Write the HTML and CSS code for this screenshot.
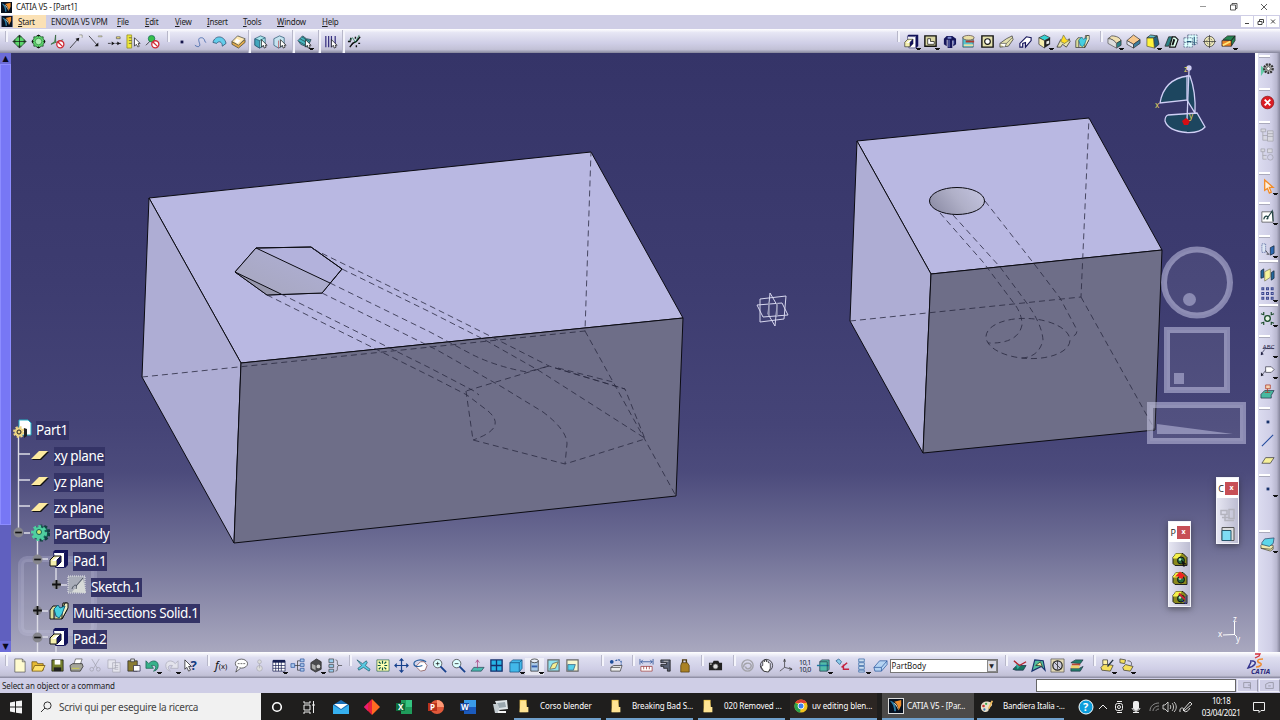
FILE: index.html
```html
<!DOCTYPE html>
<html lang="it">
    <head>
        <meta charset="UTF-8" />
        <title>CATIA V5 - [Part1]</title>
        <link rel="stylesheet" href="styles.css" />
    </head>
    <body>
        <svg class="defs" width="0" height="0">
            <symbol id="catia" viewBox="0 0 16 16">
                <path fill="#06101f" d="M0 0h16v16H0z" />
                <path fill="#2b7da8" d="M1 2c4 0 7 4 7 12H6C6 9 4 5 1 2z" />
                <path fill="#ef8d2c" d="M6 3l8-2v6l-3 6C11 9 9 5 6 3z" />
                <path fill="#fff2cf" d="M5 4c3 1 5 4 6 9l-2-4z" />
            </symbol>
            <symbol id="pad" viewBox="0 0 20 20">
                <path fill="#12125a" d="M6 1h13v15l-3 3V3H4z" />
                <path fill="#fff" stroke="#12125a" d="M4.500 3.500h11v15h-9z" />
                <path fill="#f4efae" stroke="#111" d="M1 11l4-4h7v6l-4 4H1z" />
                <path fill="#fff" d="M8 8h4l-4 4H3z" />
                <path fill="none" stroke="#111" d="M8 17v-6l4-4" />
                <path fill="#12125a" d="M8 11l4-4v6l-4 4z" />
            </symbol>
            <symbol id="plane" viewBox="0 0 20 12">
                <path fill="#111" d="M2 11l8-8h9l-8 8z" />
                <path fill="#fdeaa0" d="M1 10l8-8h9l-8 8z" />
            </symbol>
            <symbol id="loft" viewBox="0 0 20 20">
                <path fill="#d9dc9a" stroke="#111" d="M1 18V9l3-4h5l-4 4v9zM5 18h8l5-9V2h-4l-1 7" />
                <path fill="#f1efc0" stroke="#111" d="M13 9l3-7h3v5l-6 11z" />
                <path fill="#45cfe0" stroke="#16607a" d="M5 8l4-4 2 3 5-2-3 8-3 4-3-2z" />
            </symbol>
            <symbol id="minus" viewBox="0 0 10 10">
                <circle cx="5" cy="5" r="4.500" fill="#85858c" />
                <path stroke="#111" stroke-width="1.500" d="M2 5h6" />
            </symbol>
            <symbol id="plus" viewBox="0 0 10 10">
                <circle cx="5" cy="5" r="4" fill="#85858c" />
                <path stroke="#111" stroke-width="1.600" d="M1 5h8M5 1v8" />
            </symbol>
            <symbol id="house" viewBox="0 0 16 16">
                <path fill="#8b8a1c" stroke="#222" d="M1 6l3-4h7l4 4v8H3l-2-2z" />
                <path fill="#f4f04b" d="M1 6l3-4h6L7 6v1H1z" />
                <circle cx="9" cy="9" r="3.500" fill="#256b3c" stroke="#111" />
                <circle cx="8" cy="8" r="1.300" fill="#b7eec0" />
            </symbol>
            <symbol id="folder" viewBox="0 0 12 16">
                <path fill="#f1c951" d="M1 1h8v14H1z" />
                <path fill="#ffe493" d="M2 2h6l1 7h2v6H1z" />
            </symbol>
            <symbol id="cube" viewBox="0 0 16 16">
                <path fill="#a8e6ec" stroke="#24526d" d="M2 5l6-3 5 2v8l-6 3-5-3z" />
                <path fill="#43a7bd" stroke="#24526d" d="M2 5l5 2v8l-5-3zM7 7l6-3" />
            </symbol>
            <symbol id="arrow" viewBox="0 0 16 16">
                <path fill="#fff" stroke="#111" d="M9 6v8l2-2 1 3 2-1-1-2h2z" />
            </symbol>
        </svg>

        <header class="titlebar">
            <svg class="logo"><use href="#catia" /></svg>
            <span>CATIA V5 - [Part1]</span>
            <svg class="win-btns" width="120" height="15" fill="none" stroke="#333">
                <path stroke="#999" d="M20 6.500h6" />
                <path stroke-width=".8" d="M50.500 5h5v5h-5zM52 5V3.500h5V8.500H56M81 4l6 6M87 4l-6 6" />
            </svg>
        </header>
        <nav class="menubar">
            <svg class="logo"><use href="#catia" /></svg>
            <span class="start"><u>S</u>tart</span>
            <span class="m-vpm">ENOVIA V5 VPM</span>
            <span class="m-file"><u>F</u>ile</span>
            <span class="m-edit"><u>E</u>dit</span>
            <span class="m-view"><u>V</u>iew</span>
            <span class="m-insert"><u>I</u>nsert</span>
            <span class="m-tools"><u>T</u>ools</span>
            <span class="m-window"><u>W</u>indow</span>
            <span><u>H</u>elp</span>
            <svg class="mdi" viewBox="0 0 38 11">
                <path fill="#fff" d="M0 0h12v11H0zM13 0h12v11H13zM26 0h12v11H26z" />
                <path fill="none" stroke="#444" d="M4 7.500h4M17 5.500h4v3h-4zM18.500 5V3.500h4V7M30 3.500l4 4M34 3.500l-4 4" />
            </svg>
        </nav>

        <div class="toolbar">
            <div class="group">
                <svg viewBox="0 0 16 16"><path fill="#5bd46b" stroke="#123d1c" d="M8 1l7 7-7 7-7-7z" /><path stroke="#111" d="M8 1v14M1 8h14M6 3h4M6 13h4M3 6v4M13 6v4" /></svg>
                <svg viewBox="0 0 16 16"><path fill="#5bd46b" stroke="#123d1c" d="M8 1l3 2h2v2l2 3-2 3v2h-2l-3 2-3-2H3v-2L1 8l2-3V3h2z" /><circle cx="8" cy="8" r="3.500" fill="#a8edaf" stroke="#2f7f3c" /><path fill="#111" d="M6 1h4L8 3zM6 15h4l-2-2zM1 6v4l2-2zM15 6v4l-2-2z" /></svg>
                <svg viewBox="0 0 16 16"><path fill="#5bd46b" stroke="#2b5a33" d="M6 1v8l-5 2 4-3zM6 9l8-3" /><circle cx="11" cy="11" r="3.800" fill="#fff" stroke="#d02a34" stroke-width="1.400" /><path stroke="#d02a34" stroke-width="1.400" d="M8.500 8.500l5 5" /></svg>
                <svg viewBox="0 0 16 16"><path stroke="#111" d="M1 15l8-9" /><path fill="#111" d="M7 5l4-1-1 4z" /><path stroke="#777" d="M11 1h3v3" fill="#ffe" /></svg>
                <svg viewBox="0 0 16 16"><path stroke="#111" d="M1 2l9 10" /><path fill="#111" d="M11 9v4H7z" /><path fill="#ff9" stroke="#888" d="M11 2h4v1h-4z" /></svg>
                <svg viewBox="0 0 16 16"><path stroke="#111" stroke-dasharray="3 1" d="M1 10h14" /><path fill="#111" d="M5 8l3 2-3 2zM11 8l3 2-3 2z" /><path fill="#fe7" stroke="#555" d="M10 3h4v2h-4z" /></svg>
                <svg viewBox="0 0 16 16"><path fill="#efe83d" stroke="#8a8414" d="M1 1h5v14H1z" /><path stroke="#444" d="M3 4h3M3 7h3M3 10h3" /><path fill="#fff" stroke="#111" d="M9 4v9l2-2 2 3 1-1-1-3h2z" /></svg>
                <svg viewBox="0 0 16 16"><path stroke="#111" d="M1 12l6-6" /><circle cx="7" cy="5" r="3.500" fill="#37c04b" stroke="#165" /><circle cx="11" cy="11" r="3.800" fill="#fff" stroke="#d02a34" stroke-width="1.400" /><path stroke="#d02a34" stroke-width="1.400" d="M8.500 8.500l5 5" /></svg>
            </div>
            <div class="group g-wire">
                <svg viewBox="0 0 16 16"><path fill="#15154a" d="M7 7h3v3H7z" /></svg>
                <svg viewBox="0 0 16 16"><path fill="none" stroke="#25519d" d="M2 12c4 3 6 1 5-2S5 4 9 4s3 5 5 5" /></svg>
                <svg viewBox="0 0 16 16"><path fill="#63cdeb" stroke="#246" d="M1 9C3 1 13 1 15 10l-4 3C11 8 7 7 5 10z" /></svg>
                <svg viewBox="0 0 16 16"><path fill="#e0a94a" stroke="#443" d="M1 8l7 3 7-5v3l-7 6-7-4z" /><path fill="#ffe9b2" stroke="#443" d="M1 8l6-6 8 3-7 7z" /><path fill="#fff" d="M6 5l4 2-3 3-3-2z" /></svg>
            </div>
            <div class="group g-sel line">
                <svg viewBox="0 0 16 16"><use href="#cube" /><use href="#arrow" /></svg>
                <svg viewBox="0 0 16 16"><path fill="#c5e3ef" stroke="#24526d" d="M2 5l6-3 5 2v8l-6 3-5-3z" /><path fill="none" stroke="#b44" d="M7 7v8" /><use href="#arrow" /></svg>
            </div>
            <div class="group g-dress line">
                <svg class="drop" viewBox="0 0 16 16"><path fill="#46b7c1" stroke="#234" d="M1 7l5-5 4 3 5 1-4 8-7-3z" /><path fill="none" stroke="#244" d="M3 5l9 5M5 3l9 5M2 8l7 4" /><use href="#arrow" /></svg>
            </div>
            <div class="group g-bars line">
                <svg viewBox="0 0 16 16"><path stroke="#373080" stroke-width="1.300" d="M3 2v12M6 2v12M9 2v12M13 2v12" /><use href="#arrow" /></svg>
            </div>
            <div class="group g-last line">
                <svg viewBox="0 0 16 16"><path stroke="#111" stroke-width="1.500" d="M3 14l3-4 4-2 4-5M4 4v3M9 3v2M10 12v2M1 8h3M12 10h2" /><path stroke="#174" d="M2 7l4-3 3 5 4-8" fill="none" /></svg>
            </div>
            <div class="group g-right">
                <svg class="drop" viewBox="0 0 20 20"><use href="#pad" /></svg>
                <svg class="drop" viewBox="0 0 16 16"><path fill="#d9d6a3" stroke="#111" stroke-width="1.500" d="M2 2h12v11H2z" /><path fill="#fff" stroke="#111" d="M5 5h3v3h4v3H5z" /></svg>
                <svg viewBox="0 0 16 16"><path fill="#16165a" d="M2 5l3-3h6l4 3v6l-3 2V7h-1v8H6V6H5v7l-3-2z" /><path fill="#7d8ad0" d="M6 3h4v2H6zM7 6h1v8H7zM12 7h1v4h-1z" /></svg>
                <svg viewBox="0 0 16 16"><path fill="#55c5d0" stroke="#345" d="M2 3h11v11H2z" /><ellipse cx="8" cy="4" rx="6" ry="2.500" fill="#e8dfa6" stroke="#544" /><path stroke="#b0392d" stroke-width="2" d="M5 8h9" /><path stroke="#e8dfa6" stroke-width="2" d="M3 12h10" /></svg>
                <svg viewBox="0 0 16 16"><path fill="#e4e1ae" stroke="#111" stroke-width="1.500" d="M2 2h12v12H2z" /><circle cx="8" cy="8" r="3" fill="#fff" stroke="#111" stroke-width="1.200" /></svg>
                <svg viewBox="0 0 16 16"><path fill="#e4e1ae" stroke="#333" d="M1 14v-4l7-5 6-3 1 4-5 7z" /><path fill="#fff" stroke="#555" d="M1 10h7l-2 4M8 10l6-6" /></svg>
                <svg viewBox="0 0 16 16"><path fill="#fff" stroke="#16165a" stroke-width="1.200" d="M2 14v-4l7-7 5 1v3l-6 7V9l-3 1v4z" /></svg>
                <svg class="drop" viewBox="0 0 16 16"><path fill="#35d1d3" stroke="#333" d="M2 4l6-3 6 3-6 3z" /><path fill="#f5edae" stroke="#333" d="M2 4l6 3v8l-6-4z" /><path fill="#222" d="M8 7l6-3v7l-6 4z" /><path fill="#eee" d="M10 8l3-1v3l-3 1z" /></svg>
                <svg viewBox="0 0 16 16"><path fill="#e6e3ae" stroke="#222" d="M1 14l4-8 4 4 5-5 1 3-4 6-4-3-2 3z" /><path fill="#fd2" stroke="#775" d="M5 8l3-7 3 5 3 1-5 3z" /></svg>
                <svg viewBox="0 0 20 20"><use href="#loft" /></svg>
            </div>
            <div class="group g-dressup">
                <svg class="drop" viewBox="0 0 16 16"><path fill="#efdfb0" stroke="#333" d="M1 5l4-3c5 0 9 2 10 5l-5 3C8 7 5 5 1 5z" /><path fill="#2c8084" stroke="#333" d="M10 10l5-3v5l-5 3z" /><path fill="#ddd" stroke="#555" d="M1 5c4 0 7 2 9 5v5l-9-5z" /></svg>
                <svg viewBox="0 0 16 16"><path fill="#f7c88d" stroke="#333" d="M1 7l7-6 7 5-7 5z" /><path fill="#e6e6f0" stroke="#333" d="M1 7l7 4v4l-7-4z" /><path fill="#3d7fa0" stroke="#333" d="M8 11l7-5v4l-7 5z" /></svg>
                <svg class="drop" viewBox="0 0 16 16"><path fill="#24627e" stroke="#222" d="M9 4l4-2 2 9-5 4z" /><path fill="#fff33b" stroke="#554" d="M2 4h7l1 11-8-2z" /><path fill="#5cc0cc" stroke="#222" d="M2 4l4-3 7 1-4 2z" /></svg>
                <svg viewBox="0 0 16 16"><path fill="#2c8084" stroke="#222" d="M1 13l4-10h4L5 13z" /><path fill="#dfe" stroke="#111" stroke-width="1.200" d="M6 14l3-11h3l3 3-3 8z" /><path fill="#111" d="M8 12l2-7 2 1-2 6z" /></svg>
                <svg viewBox="0 0 16 16"><path fill="#dff" stroke="#457" stroke-dasharray="2 1" d="M1 4h9v10H1zM5 1h10v10h-5M5 1v13M1 9h14" /><path stroke="#257" stroke-width="1.200" d="M12 3v9M4 8h5" /></svg>
                <svg viewBox="0 0 16 16"><circle cx="8" cy="8" r="5.500" fill="#eee9ba" stroke="#333" /><path stroke="#333" d="M8 1v14M1 8h14" /><circle cx="8" cy="8" r="3" fill="none" stroke="#555" stroke-dasharray="2 1" /></svg>
                <svg class="drop" viewBox="0 0 16 16"><path fill="#258451" stroke="#222" d="M2 6l5-4h8l-4 5zM11 7l4-5v5l-4 6z" /><path fill="#ed8426" stroke="#222" d="M1 7h10v6H1z" /><path stroke="#ffe77a" stroke-width="2" d="M2 12l8-4" /></svg>
            </div>
        </div>

        <main>
            <div class="vscroll"><i>▲</i><div class="thumb"></div><i>▼</i></div>
            <div class="viewport">
                <svg class="scene" viewBox="11 53 1244 599">
                    <defs>
                        <linearGradient id="hole" x1="0" y1=".6" x2="1" y2=".2"><stop offset="0" stop-color="#8f8fa8" /><stop offset=".5" stop-color="#b0b0c8" /><stop offset="1" stop-color="#c3c3df" /></linearGradient>
                        <linearGradient id="hex" x1="0" y1="1" x2="1" y2="0"><stop offset="0" stop-color="#a6a6bd" /><stop offset="1" stop-color="#b0b0d8" /></linearGradient>
                    </defs>

                    <!-- block with the hexagonal cut -->
                    <g stroke="#0b0b12" stroke-linejoin="round">
                        <path fill="#b9b8e2" d="M149 198L591 152 683 318 241 363z" />
                        <path fill="#aeadd4" d="M149 198L142 377 234 543 241 363z" />
                        <path fill="#6e6e88" d="M241 363L683 318 676 496 234 543z" />
                        <path fill="#b3b2dc" d="M235 272L256 248 311 247 342 269 322 293 267 295z" />
                        <path fill="url(#hex)" stroke="none" d="M235 272L256 248 330 283 322 293 281 294z" />
                        <path fill="#9797ac" stroke="none" d="M235 272L281 294 267 295z" />
                        <path fill="none" d="M235 272L256 248 311 247 342 269 322 293 267 295zM256 248L330 283M235 272L281 294" />
                    </g>
                    <g class="hidden">
                        <path d="M142 377L585 331 591 152M585 331L676 496" />
                        <path d="M313 249L430 306 492 337 549 366 625 389" />
                        <path d="M342 269L430 312 485 340 538 370 643 437" />
                        <path d="M330 283L430 332 473 355Q498 367 527 372L549 366" />
                        <path d="M322 293L437 350 502 387 543 412Q567 430 567 444L565 464" />
                        <path d="M281 294L430 368 474 391 479 395" />
                        <path d="M267 295L430 376 467 395 488 411Q508 428 473 440" />
                        <path d="M466 391L473 440 565 464 645 439 625 389 555 368M549 366L466 391M558 368L613 382" />
                    </g>

                    <!-- block with the round cut -->
                    <g stroke="#0b0b12" stroke-linejoin="round">
                        <path fill="#b9b8e2" d="M857 141L1089 118 1162 250 931 274z" />
                        <path fill="#aeadd4" d="M857 141L850 321 923 453 931 274z" />
                        <path fill="#6e6e88" d="M931 274L1162 250 1155 430 923 453z" />
                        <ellipse cx="957" cy="201" rx="27.500" ry="13.500" fill="url(#hole)" />
                    </g>
                    <g class="hidden">
                        <path d="M850 321L1081 297 1089 118M1081 297L1155 430" />
                        <path d="M940 213L983 262 1013 302Q1022 313 1022 325 1018 344 988 343" />
                        <path d="M953 215L1000 267 1026 302Q1042 324 1043 340 1039 357 1022 358" />
                        <path d="M985 201L1035 265 1060 298 1077 330Q1077 337 1070 336" />
                        <ellipse cx="1028" cy="338.500" rx="42" ry="20" transform="rotate(3 1028 338)" />
                    </g>

                    <!-- axis planes -->
                    <g fill="none" stroke="#d7d7ee">
                        <path d="M760 299L786 296 784 319 760 322zM757 305L782 303 788 315 763 317zM770 293L777 305 775 326 768 314z" />
                        <path stroke="#8f8fae" stroke-width="1.500" d="M769 302v14M777 303v13" />
                    </g>

                    <!-- compass -->
                    <g fill="#1d465f" stroke="#d0cff5" stroke-width="1.300">
                        <path d="M1160 103Q1164 79 1188 76V100z" />
                        <path d="M1190 76Q1196 92 1195 113L1187 100V76z" />
                        <path d="M1168 115L1197 113 1205 127Q1200 133 1187 132.500 1168 131 1165 121 1165 116 1168 115z" />
                        <path d="M1189 70L1187 120" />
                        <circle cx="1189" cy="68" r="2" fill="#d0cff5" />
                    </g>
                    <path fill="#d60e14" d="M1186 118l4 3-2 4-4 0-2-4z" />
                    <g class="axis-label"><text x="1184" y="72">z</text><text x="1155" y="108">x</text><text x="1189" y="119">y</text></g>

                    <g class="axis-small">
                        <path d="M1234.500 622V634.500L1223 635M1234 634l3 3" />
                        <text x="1233" y="622">z</text><text x="1218" y="637">x</text><text x="1236" y="642">y</text>
                    </g>

                    <!-- overlay shapes -->
                    <g fill="#fff" fill-opacity=".07" stroke="#cfcfee" stroke-opacity=".5" stroke-width="6">
                        <circle cx="1197" cy="282.500" r="33" />
                        <rect x="1167" y="330" width="60" height="60" />
                        <rect x="1150" y="405" width="93" height="36" />
                        <rect x="21" y="559" width="73" height="74" rx="6" stroke-opacity=".22" />
                    </g>
                    <g fill="#c9c9ea" fill-opacity=".5">
                        <circle cx="1189.500" cy="299.500" r="6.500" />
                        <path d="M1174 373h10v11h-10zM1157 424l76 10h-76z" />
                    </g>

                    <!-- tree connectors -->
                    <g fill="none" stroke="#dcdce6">
                        <path stroke-width="1.400" d="M18.500 436V534M37.500 540V652M56 567V587M56 644V652" />
                        <path stroke-width="1.400" d="M19 454h11M19 480h11M19 506h11M24 533h6M42 559h6M61 585h6M42 611h6M42 637h6" />
                    </g>
                    <use href="#minus" x="13" y="527" width="11" height="11" />
                    <use href="#minus" x="32" y="554" width="11" height="11" />
                    <use href="#plus" x="51" y="579" width="11" height="11" />
                    <use href="#plus" x="32" y="605" width="11" height="11" />
                    <use href="#minus" x="32" y="632" width="11" height="11" />
                </svg>

                <ul class="tree">
                    <li>
                        <svg viewBox="0 0 20 20"><path fill="#fff" stroke="#26b0c4" d="M7 1h9l3 3v12H7z" /><circle cx="7" cy="13" r="4.500" fill="#ecd584" stroke="#ecd584" stroke-width="3" stroke-dasharray="2 1.500" /><circle cx="7" cy="13" r="2" fill="none" stroke="#222" /><path fill="#222" d="M12 9l3 1v7l-3 2z" /></svg>
                        <span>Part1</span>
                    </li>
                    <li class="l1"><svg class="flat"><use href="#plane" /></svg><span>xy plane</span></li>
                    <li class="l1"><svg class="flat"><use href="#plane" /></svg><span>yz plane</span></li>
                    <li class="l1"><svg class="flat"><use href="#plane" /></svg><span>zx plane</span></li>
                    <li class="l1">
                        <svg viewBox="0 0 20 20"><circle cx="12" cy="10" r="7" fill="#1d5f5b" stroke="#123f40" stroke-width="3" stroke-dasharray="3 2" /><circle cx="9" cy="10" r="6" fill="#4fd0a0" stroke="#4fd0a0" stroke-width="4" stroke-dasharray="2.500 2" /><circle cx="9" cy="9" r="2.500" fill="#cfe96b" stroke="#12605a" /></svg>
                        <span>PartBody</span>
                    </li>
                    <li class="l2"><svg><use href="#pad" /></svg><span>Pad.1</span></li>
                    <li class="l3">
                        <svg viewBox="0 0 20 20"><path fill="#a9adb9" stroke="#e9e9ee" stroke-dasharray="1 1" d="M1 1h17v17H1z" /><path fill="#d7dad8" d="M5 17L16 4l3 14z" /><path fill="none" stroke="#4d5560" d="M5 14c2-6 6-4 4 0M9 11l7-8" /></svg>
                        <span>Sketch.1</span>
                    </li>
                    <li class="l2"><svg><use href="#loft" /></svg><span>Multi-sections Solid.1</span></li>
                    <li class="l2"><svg><use href="#pad" /></svg><span>Pad.2</span></li>
                </ul>

                <div class="palette pal-c">
                    <h4>C<b>x</b></h4>
                    <svg viewBox="0 0 16 16"><path fill="none" stroke="#b3b3bd" stroke-width="1.500" d="M1 3h6v4H1zM5 7v6h9M9 2h5v9H9zM2 10h8" /></svg>
                    <svg viewBox="0 0 16 16"><path fill="#ddd" stroke="#555" d="M2 1h12v13H2z" /><path fill="#7edcf4" stroke="#26566b" d="M2 4h9v10H2z" /></svg>
                </div>
                <div class="palette pal-p">
                    <h4>P<b>x</b></h4>
                    <svg viewBox="0 0 16 16"><use href="#house" /><path fill="#111" d="M9 8l6 5-3 0 1 2-2 0z" /></svg>
                    <svg viewBox="0 0 16 16"><use href="#house" /><path fill="#e22" d="M3 6l5-5 6 5h-3v2H7V6z" /></svg>
                    <svg viewBox="0 0 16 16"><use href="#house" /><path fill="none" stroke="#c23" stroke-width="2" d="M7 4l6 6" /><path stroke="#33a" d="M14 6v8l-4-3" fill="none" /></svg>
                </div>
            </div>

            <aside class="sidebar">
                <div class="group"><svg viewBox="0 0 16 16"><path fill="#62c9a5" d="M1 4l5 4-5 7z" /><circle cx="9" cy="7" r="4.500" fill="#bbb" stroke="#333" stroke-width="2.500" stroke-dasharray="2 1" /><circle cx="9" cy="7" r="2" fill="#fff" stroke="#333" /></svg></div>
                <div class="group s14"><svg viewBox="0 0 16 16"><circle cx="8" cy="8" r="6.700" fill="#dc1c24" stroke="#811" /><path stroke="#fff" stroke-width="2" d="M5 5l6 6M11 5l-6 6" /></svg></div>
                <div class="group s14">
                    <svg viewBox="0 0 16 16"><path fill="#d8d8e0" stroke="#a0a0aa" d="M8 3h6v11H8zM8 6h6M8 9h6M3 4v9h5M3 8h5M1 1h5v3H1z" /></svg>
                    <svg viewBox="0 0 16 16"><path fill="#d8d8e0" stroke="#a0a0aa" d="M1 2h4v3H1zM3 5v8h4M3 9h4M8 2h5v4H8z" /><circle cx="11" cy="11" r="3" fill="none" stroke="#a0a0aa" /></svg>
                </div>
                <div class="group s13"><svg class="drop" viewBox="0 0 16 16"><path fill="#fff0dd" stroke="#f28c28" stroke-width="1.400" d="M5 1v11l3-2 2 5 2-1-2-5h4z" /></svg></div>
                <div class="group s11"><svg class="drop" viewBox="0 0 16 16"><path fill="#fff" stroke="#444" d="M2 3h12v11H2z" /><path fill="none" stroke="#244" stroke-width="1.200" d="M4 11c1-5 6-4 4 0M7 11l6-9 1 11" /></svg></div>
                <div class="group s14"><svg class="drop" viewBox="0 0 16 16"><path fill="#dde6f4" stroke="#223a7a" stroke-dasharray="1 1" d="M2 2h4v9H2z" /><path fill="#2b68b2" stroke="#123" d="M11 6l4-2v8l-4 2z" /><path stroke="#222" fill="none" d="M6 9l3 4M7 13h3" /></svg></div>
                <div class="group s6 line">
                    <svg viewBox="0 0 16 16"><path fill="#236aa0" stroke="#123" d="M1 4l3-2v9l-3 1zM12 6l3-2v8l-3 2z" /><path fill="#f6f49b" stroke="#775" d="M5 5l6-3v9l-6 4z" /></svg>
                    <svg class="drop" viewBox="0 0 16 16"><path fill="none" stroke="#39468e" stroke-width="1.100" d="M2 2h2v2H2zM7 2h2v2H7zM12 2h2v2h-2zM2 7h2v2H2zM7 7h2v2H7zM12 7h2v2h-2zM2 12h2v2H2zM7 12h2v2H7zM12 12h2v2h-2z" /></svg>
                </div>
                <div class="group s6 line"><svg class="drop" viewBox="0 0 16 16"><circle cx="8" cy="8" r="3" fill="#e4f5e4" stroke="#194a29" stroke-width="1.400" /><path stroke="#194a29" stroke-width="1.200" d="M1 3l3 1 0-3M15 3l-3 1V1M1 13l3-1v3M15 13l-3-1v3" fill="none" /></svg></div>
                <div class="group s12 wide">
                    <svg class="drop" viewBox="0 0 16 16"><text x="3" y="7" font-size="6.500" fill="#224">ABC</text><path stroke="#224" d="M3 7h12M5 8l-4 5" /><path fill="#224" d="M1 14v-4l3 3z" /></svg>
                    <svg class="drop" viewBox="0 0 16 16"><path fill="#fff" stroke="#334" d="M6 4h6l3 3-3 3H6zM6 8l-4 5" /><path fill="#223" d="M1 14v-4l3 3z" /></svg>
                    <svg viewBox="0 0 16 16"><path fill="#47b9a1" stroke="#234" d="M1 11l4-4h10l-3 5v3H1z" /><path fill="#f6d3b0" stroke="#a32" d="M6 1h5v4H6zM8 5v4M5 9h6" /></svg>
                </div>
                <div class="group s11">
                    <svg viewBox="0 0 16 16"><path fill="#17326b" d="M7 7h3v3H7z" /></svg>
                    <svg viewBox="0 0 16 16"><path stroke="#234a9e" stroke-width="1.200" d="M2 14L14 2" /></svg>
                    <svg viewBox="0 0 16 16"><path fill="#f6f09a" stroke="#333" d="M2 12l4-6h9l-4 6z" /></svg>
                </div>
                <div class="group s10"><svg class="drop" viewBox="0 0 16 16"><path fill="#17326b" d="M7 7h3v3H7z" /></svg></div>
                <div class="group s37"><svg class="drop" viewBox="0 0 16 16"><path fill="#f1ebaf" stroke="#443" d="M1 9l2-2 11 2v4l-3 2-10-3z" /><path fill="none" stroke="#443" d="M1 12l10 1 3-2" /><path fill="#5cd6ea" stroke="#246" d="M2 6l3-4 10-1-1 6-4 3-8-2z" /></svg></div>
            </aside>
        </main>

        <div class="toolbar bottom">
            <div class="group">
                <svg viewBox="0 0 16 16"><path fill="#fffbd0" stroke="#555" d="M3 1h8l3 3v11H3z" /><path fill="none" stroke="#555" d="M11 1v3h3" /></svg>
                <svg viewBox="0 0 16 16"><path fill="#e6b933" stroke="#654a0a" d="M1 13V4h5l1 2h6v7z" /><path fill="#ffe26c" stroke="#654a0a" d="M1 14l3-6h11l-3 6z" /></svg>
                <svg viewBox="0 0 16 16"><path fill="#76812e" stroke="#111" d="M2 2h12v12H2z" /><path fill="#fff" d="M5 2h6v5H5z" /><path fill="#222" d="M4 10h8v4H4z" /></svg>
                <svg viewBox="0 0 16 16"><path fill="#fff" stroke="#555" d="M5 7l2-6h7l-2 6z" /><path fill="#a5a59b" stroke="#222" d="M1 8l3-2h10l1 3-3 5H2z" /><path stroke="#dd3" d="M3 11h8" /></svg>
                <svg viewBox="0 0 16 16" fill="none" stroke="#9f9fad"><path d="M4 1l6 10M12 1L6 11" /><circle cx="4" cy="12" r="2" /><circle cx="11" cy="12" r="2" /></svg>
                <svg viewBox="0 0 16 16" fill="#e5e5ee" stroke="#a8a8b5"><path d="M1 2h8v9H1zM6 5h8v10H6zM8 8h4M8 10h4M8 12h4" /></svg>
                <svg viewBox="0 0 16 16"><path fill="#8a7c33" stroke="#222" d="M2 3h10v11H2z" /><path fill="#ddd" stroke="#333" d="M5 1h4v3H5z" /><path fill="#fff" stroke="#224" d="M8 8h7v6H8z" /></svg>
                <svg class="drop" viewBox="0 0 16 16"><path fill="#37b18a" stroke="#165b4b" d="M1 3l3 3c4-5 11-3 10 3 0 3-3 5-5 5 4-3 3-7-2-6l2 3H1z" /></svg>
                <svg class="drop" viewBox="0 0 16 16"><path fill="#e3e3ec" stroke="#aaaab8" d="M15 3l-3 3C8 1 1 3 2 9c0 3 3 5 5 5-4-3-3-7 2-6l-2 3h8z" /></svg>
                <svg viewBox="0 0 16 16"><path fill="#fff" stroke="#111" d="M2 2v10l2-2 2 4 2-1-2-4h3z" /><text x="8" y="13" font-size="14" font-weight="bold" fill="#123a80">?</text></svg>
            </div>
            <div class="group b2">
                <svg viewBox="0 0 16 16"><text x="1" y="12" font-size="12" font-style="italic" fill="#111">f</text><text x="5" y="12" font-size="8" fill="#111">(x)</text></svg>
                <svg viewBox="0 0 16 16"><ellipse cx="9" cy="6" rx="6.500" ry="4.800" fill="#fff" stroke="#333" /><path fill="#fff" stroke="#333" d="M5 9l-2 6 5-4" /><path stroke="#333" d="M5 6h2M8 6h2M11 6h2" /></svg>
                <svg viewBox="0 0 16 16" fill="#ddd" stroke="#aaaab5"><circle cx="8" cy="4" r="2" /><circle cx="8" cy="11" r="3" /><path d="M8 6v5" /></svg>
                <svg class="drop" viewBox="0 0 16 16"><path fill="#fff" stroke="#172052" d="M2 3h13v11H2z" /><path fill="#172052" d="M2 2h13v3H2z" /><path stroke="#172052" d="M2 8h13M2 11h13M5 3v11M8 3v11M11 3v11" /></svg>
                <svg viewBox="0 0 16 16"><path stroke="#333" fill="none" d="M4 8h4M8 3v10M8 3h3M8 8h3M8 13h3" /><path fill="#a9c6ed" stroke="#2c559b" d="M1 6h4v4H1zM11 1h4v3h-4zM11 6h4v3h-4zM11 11h4v3h-4z" /></svg>
                <svg class="drop" viewBox="0 0 16 16"><path fill="#4a4a4d" stroke="#222" d="M2 5l6-4 5 3v8l-6 3-5-3z" /><path fill="#aaa" d="M3 6l4 2v5l-4-2z" /><circle cx="10" cy="9" r="2" fill="#ccc" /></svg>
                <svg viewBox="0 0 16 16"><path fill="#9ce" stroke="#444" d="M1 1h5v4H1zM1 7h5v3H1zM1 12h5v3H1z" /><path fill="none" stroke="#444" d="M8 2c4 0 0 6 4 6-4 0 0 6-4 6M12 8h3" /></svg>
            </div>
            <div class="group b3">
                <svg viewBox="0 0 16 16"><path fill="#59c9e2" stroke="#245a6a" d="M1 2l6 4 4-3 1 2-2 3 5 4-1 2-6-4-5 3-1-2 4-3z" /></svg>
                <svg viewBox="0 0 16 16"><path fill="#ffffb1" stroke="#286453" d="M2 2h13v12H2z" /><path stroke="#0a5544" stroke-width="1.300" d="M8 3v3M8 10v3M3 8h3M10 8h3M4 4l2 2M12 4l-2 2M4 12l2-2M12 12l-2-2" /></svg>
                <svg viewBox="0 0 16 16"><path fill="none" stroke="#16408c" stroke-width="1.300" d="M8 1v14M1 8h14M6 3l2-2 2 2M6 13l2 2 2-2M3 6L1 8l2 2M13 6l2 2-2 2" /></svg>
                <svg viewBox="0 0 16 16"><path fill="#fff" stroke="#7c4545" d="M3 9l5-5 4 0 3 4-2 5-5 1z" /><path fill="none" stroke="#285f9e" stroke-width="1.300" d="M14 4C8 0 1 3 1 6s4 4 9 2" /></svg>
                <svg viewBox="0 0 16 16"><circle cx="6" cy="6" r="4.500" fill="#dff" stroke="#333" /><path stroke="#16408c" stroke-width="2" d="M9 9l6 6" /><path stroke="#111" d="M4 6h4M6 4v4" /></svg>
                <svg viewBox="0 0 16 16"><circle cx="6" cy="6" r="4.500" fill="#dff" stroke="#333" /><path stroke="#16408c" stroke-width="2" d="M9 9l6 6" /><path stroke="#111" d="M4 6h4" /></svg>
                <svg viewBox="0 0 16 16"><path fill="#4bbbb0" stroke="#245" d="M1 14l3-4h11l-3 4z" /><path fill="none" stroke="#a33a7a" d="M8 11V2M6 5l2-3 2 3" /></svg>
                <svg viewBox="0 0 16 16"><path fill="#27b5e6" stroke="#16306c" stroke-width="1.400" d="M2 2h12v12H2zM8 2v12M2 8h12" /></svg>
                <svg class="drop" viewBox="0 0 16 16"><path fill="#42b8e9" stroke="#164c7b" d="M2 5l3-3h10v9l-3 4H2z" /><path fill="none" stroke="#164c7b" d="M2 5h10v10M12 5l3-3" /></svg>
                <svg class="drop on" viewBox="0 0 16 16"><path fill="#aacbe8" stroke="#222" d="M4 3h8v11H4z" /><ellipse cx="8" cy="3" rx="4" ry="2" fill="#e8eff8" stroke="#222" /><path stroke="#355fae" stroke-width="2" d="M5 9h6" /></svg>
                <svg viewBox="0 0 16 16"><path fill="#8fe2ef" stroke="#666" stroke-width="1.200" d="M2 2h12v12H2z" /><path fill="#f5ef92" stroke="#555" d="M4 12l3-6 6-2-3 7z" /></svg>
                <svg viewBox="0 0 16 16"><path fill="#f7f7d0" stroke="#666" stroke-width="1.200" d="M2 2h12v12H2z" /><path fill="#56d1ea" stroke="#357" d="M3 7h8l-2 6H3z" /></svg>
            </div>
            <div class="group b4">
                <svg viewBox="0 0 16 16"><path fill="#eee" stroke="#333" d="M3 10l3-2h9l-2 6H3zM3 10h10" /><circle cx="4" cy="4" r="2" fill="#1d4e9a" /><path fill="none" stroke="#1d4e9a" stroke-width="1.200" stroke-dasharray="2 1" d="M8 3c5-3 7 1 6 4" /></svg>
            </div>
            <div class="group b5">
                <svg viewBox="0 0 16 16"><path stroke="#16408c" fill="none" d="M2 4h12M4 2L2 4l2 2M12 2l2 2-2 2M1 1v6M15 1v6" /><path fill="#fff" stroke="#933" d="M2 9h12v5H2zM5 9v3M8 9v3M11 9v3" /></svg>
                <svg viewBox="0 0 16 16"><path fill="#5b6275" stroke="#111" d="M3 2h10v12h-3v-3H6V9H3V7h6V5H3z" /><path fill="#bbb" d="M6 3h5v1H6z" /></svg>
                <svg viewBox="0 0 16 16"><path fill="#aa8125" stroke="#4c380d" d="M5 5h6l2 3v7H4V8z" /><path fill="none" stroke="#4c380d" stroke-width="1.500" d="M6 5V2h4v3" /></svg>
            </div>
            <div class="group b6">
                <svg viewBox="0 0 16 16"><path fill="#222" d="M1 5h4l1-2h5l1 2h3v8H1z" /><circle cx="8" cy="9" r="2.500" fill="#ddd" stroke="#888" /><path fill="#fff" d="M2 6h2v1H2z" /></svg>
            </div>
            <div class="group b7">
                <svg viewBox="0 0 16 16" fill="none" stroke="#a3a3a9"><circle cx="8" cy="8" r="6" stroke-width="1.500" /><path stroke-width="1.500" d="M4 10c-1-5 7-6 8-2 0 4-6 5-6 1" /></svg>
                <svg viewBox="0 0 16 16"><circle cx="8" cy="8" r="6.500" fill="none" stroke="#111" /><path fill="#fff" stroke="#111" d="M5 14l-3-5 2-1V4l1-1 1 1V2h2v2l1-1 1 1v1h1l1 1v5l-2 4z" /></svg>
                <svg viewBox="0 0 16 16"><path fill="none" stroke="#333" d="M7 2v8l-5 4M7 10l8 2M6 4l1-3 1 3M12 10l3 2-3 1" /></svg>
                <svg viewBox="0 0 16 16"><text x="2" y="7" class="num">10,1</text><text x="2" y="15" class="num">10,0</text></svg>
                <svg class="drop" viewBox="0 0 16 16"><path fill="#50bca9" stroke="#234" d="M4 4l2-2h8v10l-2 2H4z" /><path fill="none" stroke="#1d7aa0" stroke-width="1.500" d="M1 8h13" /><path stroke="#234" fill="none" d="M4 4h8v10" /></svg>
                <svg viewBox="0 0 16 16"><path fill="#8bcbea" stroke="#258" d="M1 3l3-2 3 3-2 3z" /><path stroke="#c3213e" stroke-width="1.500" fill="none" d="M13 5l-6 5M9 7v5h6" /></svg>
                <svg class="drop" viewBox="0 0 16 16"><path fill="#cde" stroke="#3267a5" d="M5 1h6v3H5zM5 5h6v3H5zM5 9h6v3H5zM5 13h6v2H5z" /></svg>
                <svg viewBox="0 0 16 16"><path fill="#b5d3f2" stroke="#27549b" d="M1 10l6-7h8v4l-6 7H2z" /><path fill="none" stroke="#27549b" d="M1 10h8l6-7M9 10v4" /></svg>
            </div>
            <div class="combo">PartBody<b>▼</b></div>
            <div class="group b8">
                <svg viewBox="0 0 16 16"><path fill="#16735f" stroke="#1a2a44" d="M1 12l4-4h10l-3 5H4z" /><path fill="#31ab9e" d="M4 7h6l-4 5z" /><path stroke="#b3232d" stroke-width="1.500" d="M15 4L8 8 2 3" fill="none" /></svg>
                <svg viewBox="0 0 16 16"><path fill="#52bd9d" stroke="#16306c" stroke-width="1.200" d="M1 14L4 2l9 1 2 10-4-4z" /><path fill="#f2ed9d" stroke="#222" d="M5 8l5-4 2 5-4-1z" /></svg>
                <svg viewBox="0 0 16 16"><path fill="#e3d9b5" stroke="#555" d="M1 1h14v14H1z" /><circle cx="8" cy="8" r="5" fill="#ccd" stroke="#222" stroke-width="1.300" /><path stroke="#222" d="M4 4l8 8M8 3v9" /></svg>
                <svg viewBox="0 0 16 16"><path fill="#20806b" stroke="#234" d="M2 5l5-3h8l-3 4zM2 11h9l4-2-3 5H2z" /><path fill="#b94a34" d="M3 6h9v2H3z" /><path fill="#eed36f" d="M2 8h9v3H2z" /></svg>
            </div>
            <div class="group b9">
                <svg class="drop" viewBox="0 0 16 16"><path fill="#f5df5d" stroke="#333" d="M1 10l4-4 9 2-3 6-9-1z" /><path fill="#fff3a3" stroke="#333" d="M3 2h5v5H3z" /><path stroke="#234" stroke-width="1.500" d="M14 2L8 9" /></svg>
                <svg class="drop" viewBox="0 0 16 16"><path fill="#f5df5d" stroke="#333" d="M4 10l3-3 8 2-3 5-7-1zM1 1l6 1-1 4-5-1z" /><path fill="none" stroke="#333" d="M9 3c4 0 5 2 4 5" /></svg>
            </div>
            <div class="brand">
                <svg viewBox="0 0 28 16"><path fill="none" stroke="#d2303c" stroke-width="1.300" d="M9 1l5 0-1 2-4 2" /><path fill="none" stroke="#34348e" stroke-width="1.500" d="M4 8h3c5 1 1 6-5 7l3-6" /><path fill="none" stroke="#ee8b31" stroke-width="1.500" d="M17 6c-7 0-6 3-3 4s0 4-4 4" /></svg>
                <em>CATIA</em>
            </div>
        </div>

        <footer class="status">
            <span>Select an object or a command</span>
            <div class="cmd"></div>
            <svg viewBox="0 0 21 13"><path fill="none" stroke="#9696a4" d="M6 3h8v6H6zM11 6h3v5" /></svg>
            <svg viewBox="0 0 21 13"><path fill="none" stroke="#9696a4" d="M6 9V5l4-2h5v7H6zM9 7h3" /></svg>
        </footer>

        <footer class="taskbar">
            <svg class="win" viewBox="0 0 32 27"><path fill="#f4f4f4" d="M10 9.500l5-1v5h-5zM16 8.300l6-.8v6h-6zM10 14.500h5v5l-5-1zM16 14.500h6v6l-6-.8z" /></svg>
            <div class="search">
                <svg viewBox="0 0 12 12" fill="none" stroke="#333"><circle cx="7.500" cy="4.500" r="3.600" /><path d="M5 7L1 11" /></svg>
                <span>Scrivi qui per eseguire la ricerca</span>
            </div>
            <div class="pins">
                <svg viewBox="0 0 16 16"><circle cx="8" cy="8" r="4.300" fill="none" stroke="#fff" stroke-width="1.600" /></svg>
                <svg viewBox="0 0 16 16"><path fill="none" stroke="#eee" d="M3 6h6v5H3zM3 2v2h6V2M3 15v-2h6v2M12.500 2v12M11 6h3" /></svg>
                <svg viewBox="0 0 16 16"><path fill="#1a6fb8" d="M0 6l8-5 8 5v9H0z" /><path fill="#fff" d="M1 5h14l-7 5z" /><path fill="#36b0ef" d="M0 6l8 5 8-5v9H0z" /></svg>
                <svg viewBox="0 0 16 16"><path fill="#e8203c" d="M8 0L0 8l8 8z" /><path fill="#ff6b22" d="M8 0l8 8-8 8z" /><path fill="#e91c74" d="M4 4v8L0 8z" /></svg>
                <svg viewBox="0 0 16 16"><path fill="#1f9c5b" d="M5 1h11v14H5z" /><path fill="#35c481" d="M10 1h6v7h-6z" /><path fill="#0f6d3b" d="M0 4h9v8H0z" /><text x="2" y="11" class="ltr">X</text></svg>
                <svg viewBox="0 0 16 16"><circle cx="9" cy="8" r="7" fill="#e0593a" /><path fill="#ff9a76" d="M9 1a7 7 0 017 7H9z" /><path fill="#b8311b" d="M0 4h9v8H0z" /><text x="2" y="11" class="ltr">P</text></svg>
                <svg viewBox="0 0 16 16"><path fill="#3a9be8" d="M4 1h12v14H4z" /><path fill="#1b5bbd" d="M4 8h12v7H4z" /><path fill="#1747a0" d="M0 4h9v8H0z" /><text x="1" y="11" class="ltr">W</text></svg>
                <svg viewBox="0 0 16 16"><path fill="#dfe5e8" d="M3 2l12-1 1 9-9 1z" /><path fill="#9aa7ae" d="M5 4l8-1 1 5-7 1z" /><path fill="#c4ccd0" d="M1 5h5l2 9H3z" /><path fill="#f3f3f3" d="M6 12h8v2H6z" /></svg>
            </div>
            <div class="tasks">
                <div class="task"><svg><use href="#folder" /></svg>Corso blender</div>
                <div class="task"><svg><use href="#folder" /></svg>Breaking Bad S...</div>
                <div class="task"><svg><use href="#folder" /></svg>020 Removed ...</div>
                <div class="task chrome"><svg viewBox="0 0 16 16"><circle cx="8" cy="8" r="7.500" fill="#f2c31d" /><path fill="#2ba24c" d="M1.500 4.200L8 8l-1 7.500A7.500 7.500 0 011.500 4.200z" /><path fill="#df3d33" d="M1.500 4.200A7.500 7.500 0 0114.500 4.200L8 5z" /><circle cx="8" cy="8" r="3.400" fill="#3b7ded" stroke="#fff" /></svg>uv editing blen...</div>
                <div class="task active"><svg><use href="#catia" /></svg>CATIA V5 - [Par...</div>
                <div class="task paint"><svg viewBox="0 0 16 16"><path fill="#e8dfc9" d="M1 9c0-5 5-7 9-6 6 1 4 6 1 6-2 1 0 3-2 5-3 2-8 0-8-5z" /><circle cx="4" cy="8" r="1.500" fill="#c33" /><circle cx="7" cy="5.500" r="1.300" fill="#37a64b" /><circle cx="5" cy="12" r="1.300" fill="#37b" /><path stroke="#eeb95c" stroke-width="2" d="M10 11l4-9" /></svg>Bandiera Italia -...</div>
            </div>
            <div class="tray">
                <svg viewBox="0 0 16 16"><circle cx="8" cy="8" r="7" fill="#0d9ddb" stroke="#fff" /><text x="5" y="12" class="help">?</text></svg>
                <svg viewBox="0 0 16 16" fill="none" stroke="#eee"><path d="M4 10l4-4 4 4" /></svg>
                <svg viewBox="0 0 16 16" fill="none" stroke="#eee"><path d="M6 2.500h5M6 13.500h5" /><rect x="4.500" y="4.500" width="7" height="7" rx="2" /><circle cx="8" cy="8" r="1.500" /></svg>
                <svg viewBox="0 0 16 16"><rect x="5" y="2" width="6" height="9" rx="2" fill="#eee" /><path stroke="#eee" d="M8 11v3M5 13.500h6M4 9c1 4 7 4 8 0" fill="none" /></svg>
                <svg viewBox="0 0 16 16" fill="none" stroke="#a5a5a5" stroke-width=".8"><path d="M5 12c0-5 4-8 9-8M8 12c0-3 3-5 6-5M11 12c0-1 1-2 3-2" /></svg>
                <svg viewBox="0 0 16 16" fill="none" stroke="#eee" stroke-width=".8"><path d="M2 6v4h2l3 3V3L4 6zM9 6c1 1 1 3 0 4M11 4c2 2 2 6 0 8M13 3c3 3 3 7 0 10" /></svg>
                <svg viewBox="0 0 16 16" fill="none" stroke="#eee" stroke-width=".9"><path d="M5 11l7-8 2 2-8 7zM2 13c-1-5 4-5 4-2s4 2 6-2" /></svg>
            </div>
            <div class="clock">10:18<br />03/04/2021</div>
            <svg class="note" viewBox="0 0 16 16" fill="none" stroke="#eee"><path d="M2.500 3.500h11v8H10l-2 2v-2H2.500z" /></svg>
        </footer>
    </body>
</html>
```

FILE: styles.css
```css
* {
    box-sizing: border-box;
}

body {
    margin: 0;
    width: 1280px;
    height: 720px;
    overflow: hidden;
    display: flex;
    flex-direction: column;
    background: #cfcee6;
    font-family: "Noto Sans", "Open Sans", sans-serif;
    font-size: 8px;
    color: #222;
}

svg {
    display: block;
    flex: none;
}

.defs {
    position: absolute;
}

.logo {
    width: 11px;
    height: 11px;
}

/* title and menu */
.titlebar {
    height: 15px;
    flex: none;
    display: flex;
    align-items: center;
    gap: 4px;
    padding-left: 1px;
    background: #fff;
    line-height: 14px;
    letter-spacing: -0.25px;
}
.titlebar span {
    padding-bottom: 1px;
}
.titlebar .win-btns {
    margin-left: auto;
    margin-right: -20px;
    width: 120px;
}

.menubar {
    height: 14px;
    flex: none;
    display: flex;
    align-items: center;
    padding: 0 1px 1px;
    background: #cfcee6;
    line-height: 13px;
    letter-spacing: -0.25px;
}
.menubar .logo {
    width: 12px;
}
.menubar u {
    text-underline-offset: 1px;
}
.menubar .start {
    width: 33px;
    padding-left: 5px;
    background: #fbe1b5;
}
.menubar .m-vpm {
    width: 71px;
    padding-left: 5px;
}
.m-file {
    width: 28px;
}
.m-edit {
    width: 30px;
}
.m-view {
    width: 32px;
}
.m-insert {
    width: 36px;
}
.m-tools {
    width: 34px;
}
.m-window {
    width: 45px;
}
.menubar .mdi {
    margin-left: auto;
    width: 38px;
    height: 11px;
}

/* toolbars */
.toolbar {
    height: 24px;
    flex: none;
    display: flex;
    align-items: center;
    padding-left: 9.5px;
    background: linear-gradient(#fff, #e6e6f4 15%, #cfcee6 60%, #c2c1d6 85%, #85859b);
}
.group {
    display: flex;
    position: relative;
}
.group svg {
    width: 19px;
    height: 15px;
    overflow: visible;
    stroke-width: 0.75;
}
.toolbar .group::before {
    content: "";
    position: absolute;
    left: -5px;
    top: -3px;
    width: 2px;
    height: 11px;
    border-left: 1px solid #b8b8ca;
    background: #f4f4fb;
}
.toolbar .group.line::before {
    left: -3px;
    top: -4px;
    height: 23px;
}
.g-wire {
    margin-left: 10px;
}
.g-sel {
    margin-left: 3px;
}
.g-dress {
    margin-left: 6px;
}
.g-bars {
    margin-left: 7px;
}
.g-last {
    margin-left: 5px;
}
.g-right {
    margin-left: 538px;
}
.g-dressup {
    margin-left: 13px;
}

/* small menu arrow in the corner of an icon */
.drop {
    background: linear-gradient(#111, #111) 14px 14px / 5px 1px no-repeat,
        linear-gradient(#111, #111) 15px 15px / 3px 1px no-repeat;
}
.toolbar .drop {
    height: 17px;
    padding-bottom: 2px;
    margin-bottom: -2px;
}
.drop.on {
    background-color: #fff8;
}

.bottom {
    height: 26px;
    padding-top: 1px;
    background: linear-gradient(#fff, #dedef0 22%, #cfcee6 65%, #c2c1d6 90%, #85859b);
}
.b2,
.b5,
.b6,
.b8,
.b9 {
    margin-left: 12px;
}
.b3 {
    margin-left: 9px;
}
.b4 {
    margin-left: 24px;
}
.b7 {
    margin-left: 13px;
}
.num {
    fill: #123;
    font-size: 7.5px;
    letter-spacing: -0.5px;
}
.combo {
    width: 108px;
    height: 14px;
    display: flex;
    justify-content: space-between;
    border: 1px solid #777;
    background: #fff;
    line-height: 12px;
    padding-left: 1px;
}
.combo b {
    width: 10px;
    background: #dcdce4;
    border: 1px solid #888;
    font: 6px/10px "DejaVu Sans", sans-serif;
    text-align: center;
}
.brand {
    margin: -3px 0 0 auto;
    width: 34px;
    color: #2a2a7c;
}
.brand svg {
    width: 28px;
    height: 16px;
}
.brand em {
    display: block;
    margin: -1px 0 0 5px;
    font: italic bold 7px/7px "Open Sans", sans-serif;
}

/* work area */
main {
    flex: 1;
    min-height: 0;
    display: flex;
}

.vscroll {
    width: 11px;
    display: flex;
    flex-direction: column;
    background: #6060bf;
}
.vscroll i {
    height: 11px;
    background: #6c6cd8;
    color: #08081c;
    font: 8px/11px "DejaVu Sans", sans-serif;
    text-align: center;
}
.vscroll .thumb {
    height: 461px;
    margin-bottom: auto;
    border: 1px solid #8c8cff;
    background: #7777f5;
}

.viewport {
    width: 1244px;
    position: relative;
    overflow: hidden;
    background: linear-gradient(#353468, #3d3c70 38%, #454477 62%, #4c4b7c 70%, #6d6d94 82%, #a9a8bf);
}
.scene {
    width: 1244px;
    height: 599px;
}
.hidden {
    fill: none;
    stroke: #2a2a40;
    stroke-width: 0.8;
    stroke-dasharray: 6 4;
}
.axis-label {
    fill: #e9d95b;
    font-size: 8px;
}
.axis-small {
    fill: #fff;
    font-size: 8px;
}
.axis-small path {
    fill: none;
    stroke: #fff;
}

.tree {
    position: absolute;
    left: 1px;
    top: 364.5px;
    margin: 0;
    padding: 0;
    list-style: none;
    color: #fff;
    font-size: 13.5px;
    letter-spacing: -0.4px;
}
.tree li {
    height: 26.1px;
    display: flex;
    align-items: center;
}
.tree svg {
    width: 20px;
    height: 20px;
    margin: -4px 4px 0 0;
}
.tree svg.flat {
    height: 12px;
}
.tree span {
    height: 19px;
    padding: 0 1px 0 0;
    background: #343366;
    line-height: 19px;
}
.l1 {
    padding-left: 18px;
}
.l2 {
    padding-left: 37px;
}
.l3 {
    padding-left: 55px;
}

.palette {
    position: absolute;
    width: 23px;
    display: flex;
    flex-direction: column;
    align-items: center;
    gap: 2px;
    border: 1px solid #f2f2f8;
    background: linear-gradient(90deg, #e6e6f2, #bdbdd2);
    box-shadow: 0 2px 6px #2228;
}
.palette h4 {
    width: 21px;
    height: 20px;
    margin: 0 0 7px;
    display: flex;
    justify-content: flex-end;
    align-items: center;
    gap: 1px;
    background: #fff;
    font: 9px "Open Sans", sans-serif;
}
.palette h4 b {
    width: 13px;
    height: 13px;
    background: #c74f56;
    color: #fff;
    font: bold 7px/12px "Open Sans", sans-serif;
    text-align: center;
}
.palette svg {
    width: 16px;
    height: 17px;
}
.pal-c {
    left: 1205px;
    top: 424px;
    height: 67px;
}
.pal-p {
    left: 1157px;
    top: 468px;
    height: 86px;
}

.sidebar {
    width: 25px;
    padding: 7px 0 0 2px;
    border-left: 3px solid #fff;
    background: linear-gradient(90deg, #dcdcf0, #cfcee6 60%, #b8b7cf 85%, #85859b);
}
.sidebar .group {
    flex-direction: column;
}
.sidebar .group svg {
    width: 15px;
    height: 19px;
}
.sidebar .group::before {
    content: "";
    position: absolute;
    left: -1px;
    top: -5px;
    width: 11px;
    height: 2px;
    border-bottom: 1px solid #aaaabc;
    background: #fff;
}
.sidebar .group.line::before {
    width: 19px;
}
.sidebar .drop {
    width: 18px;
    padding-right: 3px;
    background-position: 13px 16px, 14px 17px;
}
.sidebar .group .drop {
    width: 18px;
}
.sidebar .wide {
    gap: 2px;
}
.s6 {
    margin-top: 6px;
}
.s10 {
    margin-top: 10px;
}
.s11 {
    margin-top: 11px;
}
.s12 {
    margin-top: 12px;
}
.s13 {
    margin-top: 13px;
}
.s14 {
    margin-top: 14px;
}
.s37 {
    margin-top: 37px;
}

/* status line */
.status {
    height: 15px;
    flex: none;
    display: flex;
    align-items: center;
    gap: 1px;
    padding-left: 2px;
    background: #cfcee6;
    letter-spacing: -0.1px;
}
.status span {
    padding-bottom: 1px;
}
.status .cmd {
    width: 200px;
    height: 13px;
    margin-left: auto;
    border: 1px solid #666;
    background: #fff;
}
.status svg {
    width: 21px;
    height: 13px;
    border: 1px solid #efeff8;
    border-right-color: #9a9aac;
}

/* windows taskbar */
.taskbar {
    height: 27px;
    flex: none;
    display: flex;
    align-items: center;
    background: #1f1e1d;
    color: #fff;
}
.win {
    width: 32px;
    height: 27px;
}
.search {
    width: 229px;
    height: 27px;
    display: flex;
    align-items: center;
    gap: 7px;
    padding-left: 8px;
    background: #f1f1f1;
    color: #444;
    font-size: 10px;
    letter-spacing: -0.28px;
}
.search svg {
    width: 12px;
    height: 12px;
}
.pins {
    width: 253px;
    display: flex;
    gap: 15.8px;
    padding-left: 8px;
}
.pins svg {
    width: 16px;
    height: 16px;
}
.ltr {
    fill: #fff;
    font-size: 8px;
    font-weight: bold;
}
.tasks {
    display: flex;
    gap: 5px;
}
.task {
    width: 87px;
    height: 27px;
    display: flex;
    align-items: center;
    gap: 9px;
    padding: 0 0 0 3px;
    border-bottom: 2px solid #6f9fcb;
    font-size: 8px;
    letter-spacing: -0.12px;
    white-space: nowrap;
}
.task svg {
    width: 14px;
    height: 14px;
}
.task.active svg {
    width: 16px;
    height: 16px;
    border: 1px solid #ddd;
}
.task.chrome,
.task.active {
    gap: 4px;
    background: #2c2623;
}
.task.chrome {
    padding-left: 4px;
}
.task.active {
    width: 92px;
    margin-right: -2px;
    padding-left: 6px;
    gap: 3px;
    background: #4c4a49;
}
.task.paint {
    letter-spacing: -0.2px;
}
.tray {
    display: flex;
    gap: 0.7px;
    margin-left: 14px;
}
.tray svg {
    width: 16px;
    height: 16px;
}
.help {
    fill: #fff;
    font-size: 11px;
    font-weight: bold;
}
.clock {
    width: 44px;
    margin-left: 5px;
    font-size: 8px;
    line-height: 12px;
    letter-spacing: -0.4px;
    text-align: center;
    white-space: nowrap;
}
.note {
    width: 16px;
    height: 16px;
    margin: 0 13px 0 auto;
}
```
